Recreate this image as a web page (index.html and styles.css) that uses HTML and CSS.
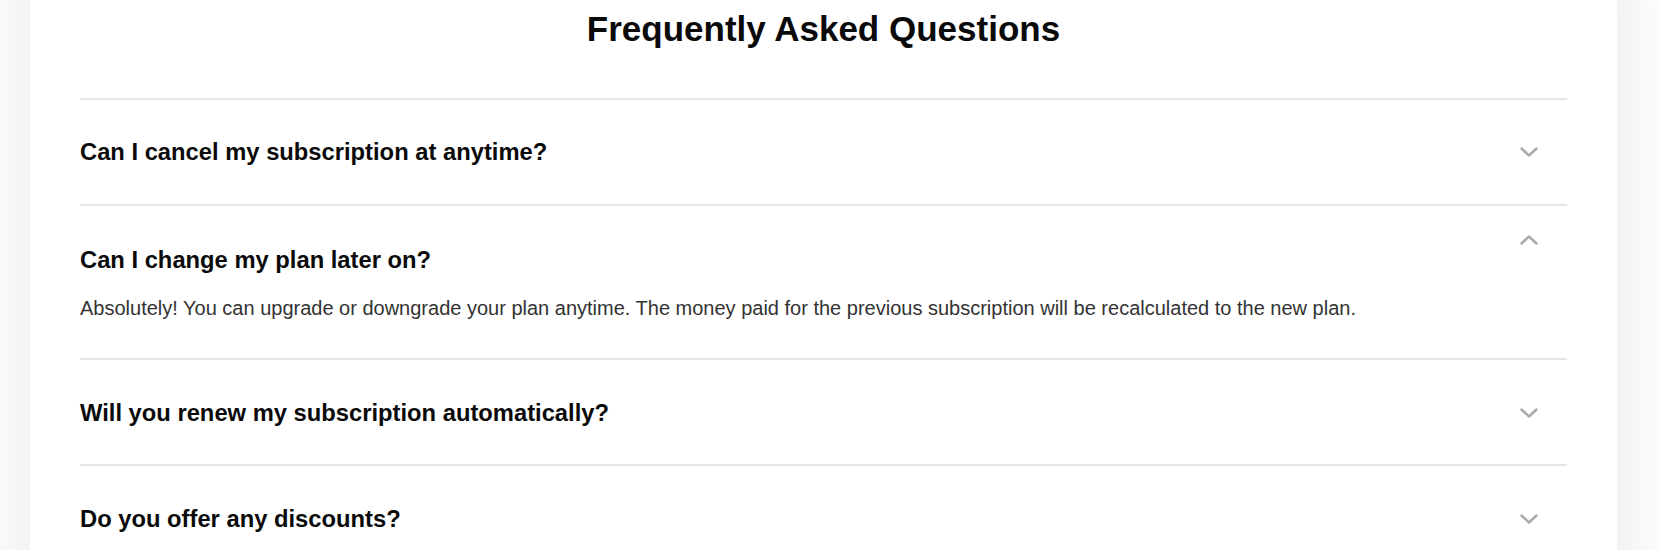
FILE: index.html
```html
<!DOCTYPE html>
<html lang="en">
<head>
  <meta charset="UTF-8" />
  <meta name="viewport" content="width=device-width, initial-scale=1.0" />
  <title>FAQ</title>
  <link rel="stylesheet" href="styles.css">
</head>
<body>
  <div class="card">
    <h1>Frequently Asked Questions</h1>

    <div class="faq-list">
      <div class="faq-item">
        <div class="faq-question">
          <span>Can I cancel my subscription at anytime?</span>
          <svg class="faq-icon" width="18" height="10" viewBox="0 0 18 10"><polyline points="1.5,1.5 9,8.5 16.5,1.5" /></svg>
        </div>
      </div>

      <div class="faq-item open">
        <div class="faq-question">
          <span>Can I change my plan later on?</span>
          <svg class="faq-icon" width="18" height="10" viewBox="0 0 18 10"><polyline points="1.5,1.5 9,8.5 16.5,1.5" /></svg>
        </div>
        <p class="faq-answer">Absolutely! You can upgrade or downgrade your plan anytime. The money paid for the previous subscription will be recalculated to the new plan.</p>
      </div>

      <div class="faq-item">
        <div class="faq-question">
          <span>Will you renew my subscription automatically?</span>
          <svg class="faq-icon" width="18" height="10" viewBox="0 0 18 10"><polyline points="1.5,1.5 9,8.5 16.5,1.5" /></svg>
        </div>
      </div>

      <div class="faq-item">
        <div class="faq-question">
          <span>Do you offer any discounts?</span>
          <svg class="faq-icon" width="18" height="10" viewBox="0 0 18 10"><polyline points="1.5,1.5 9,8.5 16.5,1.5" /></svg>
        </div>
      </div>
    </div>
  </div>
</body>
</html>
```

FILE: styles.css
```css
* { box-sizing: border-box; }
html, body { height: 100%; }
body {
  font-family: 'Liberation Sans', Arial, sans-serif;
  background: #ffffff;
  margin: 0;
  overflow: hidden;
}
.card {
  background: white;
  margin: -60px 43px 0 30px;
  padding: 68px 50px 80px;
  box-shadow: 0 0 80px rgba(0,0,0,0.1);
}
h1 {
  text-align: center;
  font-size: 35px;
  line-height: 42px;
  font-weight: 700;
  color: #0a0a0a;
  margin: 0 0 48px;
}
.faq-item {
  border-top: 2px solid #e6e6e6;
}
.faq-question {
  display: flex;
  align-items: center;
  justify-content: space-between;
  padding: 35px 29px 35px 0;
  font-size: 23.75px;
  line-height: 34px;
  font-weight: 700;
  color: #0a0a0a;
}
.faq-item:nth-child(n+3) .faq-question {
  padding-top: 36px;
  padding-bottom: 34px;
}
.faq-icon { flex-shrink: 0; }
.faq-icon polyline {
  fill: none;
  stroke: #ababab;
  stroke-width: 2.5;
  stroke-linecap: round;
  stroke-linejoin: round;
}
.faq-item.open .faq-question {
  padding-top: 37px;
  padding-bottom: 16px;
}
.faq-item.open .faq-icon {
  align-self: flex-start;
  margin-top: -8px;
  transform: rotate(180deg);
}
.faq-answer {
  margin: 0;
  padding-bottom: 35px;
  font-size: 20px;
  line-height: 30px;
  color: #333;
}
```
